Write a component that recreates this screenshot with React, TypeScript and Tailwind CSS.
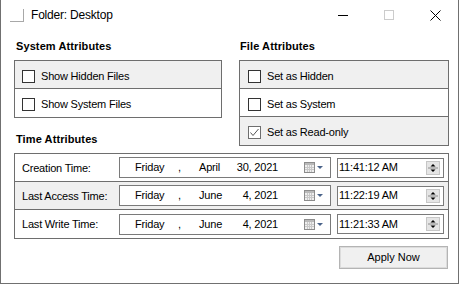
import React from 'react';

const font = "font-['Liberation_Sans',Arial,sans-serif]";

function CheckBox({ checked }: { checked?: boolean }) {
  return (
    <span
      className={`flex h-[13px] w-[13px] shrink-0 items-center justify-center border bg-white ${
        checked ? 'border-[#6e6e6e]' : 'border-[#333333]'
      }`}
    >
      {checked && (
        <svg width="11" height="11" viewBox="0 0 11 11">
          <polyline points="1.5,5.5 4,8.5 9.5,2" fill="none" stroke="#555555" strokeWidth="1" />
        </svg>
      )}
    </span>
  );
}

function CheckRow({ label, checked, gray, pl }: { label: string; checked?: boolean; gray?: boolean; pl: string }) {
  return (
    <div className={`flex h-[28px] items-center gap-[6px] pt-[3px] ${pl} ${gray ? 'bg-[#f0f0f0]' : 'bg-white'}`}>
      <CheckBox checked={checked} />
      <span className="text-[11px] leading-[13px] tracking-[-0.2px] text-black">{label}</span>
    </div>
  );
}

function CalendarIcon() {
  return (
    <svg width="20" height="11" viewBox="0 0 20 11">
      <rect x="0.5" y="0.5" width="10" height="10" fill="#eeeeee" stroke="#8c8c8c" />
      <rect x="1" y="1" width="9" height="2" fill="#b9b9b9" />
      <line x1="1" y1="5.5" x2="10" y2="5.5" stroke="#c8c8c8" />
      <line x1="1" y1="7.5" x2="10" y2="7.5" stroke="#c8c8c8" />
      <line x1="3.5" y1="3" x2="3.5" y2="10" stroke="#c8c8c8" />
      <line x1="5.5" y1="3" x2="5.5" y2="10" stroke="#c8c8c8" />
      <line x1="7.5" y1="3" x2="7.5" y2="10" stroke="#c8c8c8" />
      <path d="M13 4 L19 4 L16 7 Z" fill="#4a6389" />
    </svg>
  );
}

function Spin() {
  return (
    <span className="flex h-[14px] w-[14px] shrink-0 items-center justify-center border border-[#c6c6c6] bg-[#e5e5e5]">
      <svg width="12" height="12" viewBox="0 0 12 12">
        <path d="M6 2 L8.5 4.5 L3.5 4.5 Z" fill="#000000" />
        <line x1="1" y1="6" x2="11" y2="6" stroke="#8a8a8a" />
        <path d="M3.5 7.5 L8.5 7.5 L6 10 Z" fill="#000000" />
      </svg>
    </span>
  );
}

interface TimeRowData {
  label: string;
  month: string;
  day: string;
  time: string;
}

const timeRows: TimeRowData[] = [
  { label: 'Creation Time:', month: 'April', day: '30, 2021', time: '11:41:12 AM' },
  { label: 'Last Access Time:', month: 'June', day: '4, 2021', time: '11:22:19 AM' },
  { label: 'Last Write Time:', month: 'June', day: '4, 2021', time: '11:21:33 AM' },
];

export default function App() {
  return (
    <div className={`${font} h-[284px] w-[459px] border-b border-l border-r border-[#707070] bg-white text-black`}>
      {/* title bar */}
      <div className="flex h-[30px] items-center">
        <span className="ml-[9px] h-[13px] w-[14px] border-b border-r border-[#a8a8a8]" />
        <span className="ml-[7px] text-[12px] leading-[14px] tracking-[-0.2px]">Folder: Desktop</span>
        <div className="ml-auto flex">
          <span className="flex h-[30px] w-[46px] items-center justify-center">
            <svg width="10" height="10" viewBox="0 0 10 10">
              <line x1="0" y1="5.5" x2="10" y2="5.5" stroke="#000" />
            </svg>
          </span>
          <span className="flex h-[30px] w-[46px] items-center justify-center">
            <svg width="10" height="10" viewBox="0 0 10 10">
              <rect x="0.5" y="0.5" width="9" height="9" fill="none" stroke="#cccccc" />
            </svg>
          </span>
          <span className="flex h-[30px] w-[46px] items-center justify-center">
            <svg width="11" height="11" viewBox="0 0 11 11">
              <path d="M0.5 0.5 L10.5 10.5 M10.5 0.5 L0.5 10.5" stroke="#000" strokeWidth="1" />
            </svg>
          </span>
        </div>
      </div>

      <div className="pl-[13px] pt-[10px]">
        <div className="flex items-start">
          <div className="w-[208px]">
            <h2 className="ml-[2px] h-[13px] text-[11px] font-bold leading-[13px] tracking-[0.1px]">System Attributes</h2>
            <div className="mt-[7px] divide-y divide-[#6e6e6e] border border-[#6e6e6e]">
              <CheckRow label="Show Hidden Files" gray pl="pl-[7px]" />
              <CheckRow label="Show System Files" pl="pl-[7px]" />
            </div>
            <h2 className="ml-[2px] mt-[15px] h-[13px] text-[11px] font-bold leading-[13px] tracking-[0.1px]">Time Attributes</h2>
          </div>
          <div className="ml-[17px] w-[210px]">
            <h2 className="ml-[1px] h-[13px] text-[11px] font-bold leading-[13px] tracking-[0.1px]">File Attributes</h2>
            <div className="mt-[7px] divide-y divide-[#6e6e6e] border border-[#6e6e6e]">
              <CheckRow label="Set as Hidden" gray pl="pl-[8px]" />
              <CheckRow label="Set as System" pl="pl-[8px]" />
              <CheckRow label="Set as Read-only" checked gray pl="pl-[8px]" />
            </div>
          </div>
        </div>

        <div className="mt-[7px] w-[435px] divide-y divide-[#6e6e6e] border border-[#6e6e6e]">
          {timeRows.map((row, i) => (
            <div
              key={row.label}
              className={`flex h-[28px] items-center pl-[7px] text-[11px] leading-[13px] tracking-[-0.2px] ${
                i === 1 ? 'bg-[#f0f0f0]' : 'bg-white'
              }`}
            >
              <span className="w-[97px] whitespace-nowrap pt-[1px]">{row.label}</span>
              <div className="flex h-[21px] w-[212px] items-center whitespace-nowrap border border-[#7a7a7a] bg-white">
                <span className="ml-[15px] w-[43px]">Friday</span>
                <span className="w-[21px]">,</span>
                <span className="w-[30px]">{row.month}</span>
                <span className="w-[49px] text-right">{row.day}</span>
                <span className="ml-[26px] flex items-center">
                  <CalendarIcon />
                </span>
              </div>
              <div className="ml-[6px] flex h-[20px] w-[107px] items-center whitespace-nowrap border border-[#7a7a7a] bg-white pl-[1px]">
                <span>{row.time}</span>
                <span className="ml-auto mr-[3px]">
                  <Spin />
                </span>
              </div>
            </div>
          ))}
        </div>

        <div className="mt-[7px] flex w-[435px] justify-end pr-[1px]">
          <button className="h-[23px] w-[109px] border border-[#b4b4b4] bg-[#f0f0f0] text-[11px] leading-[13px] text-black shadow-[inset_0_0_0_1px_#dcdcdc]">
            Apply Now
          </button>
        </div>
      </div>
    </div>
  );
}
